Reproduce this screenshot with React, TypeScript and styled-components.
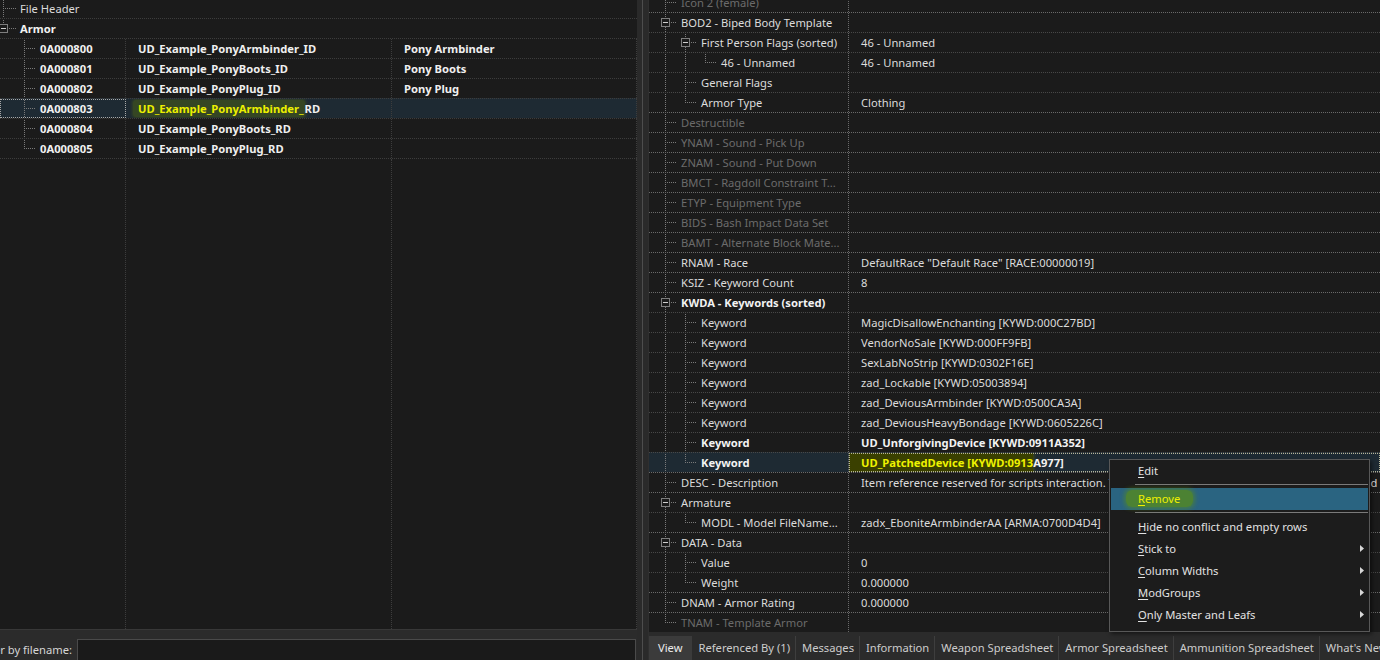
import React from 'react';
import styled, { createGlobalStyle } from 'styled-components';

const GlobalStyle = createGlobalStyle`
  html, body { margin: 0; padding: 0; background: #1b1b1b; overflow: hidden; }
  body { font-family: "Noto Sans", "DejaVu Sans", sans-serif; font-size: 11.2px; color: #dedede; }
  * { box-sizing: border-box; }
`;

const LINE = '#7a7a7a';
const BG = '#1b1b1b';
const SEL = '#1e2a33';

type TNode = {
  label: string;
  value?: string;
  cols?: [string, string];
  dim?: boolean;
  bold?: boolean;
  selected?: boolean;
  mark?: string;
  rest?: string;
  children?: TNode[];
};

type FlatRow = TNode & { level: number; last: boolean; conts: boolean[]; box: boolean };

type TreeCfg = { start: number; guide: (l: number) => number; textX: (l: number) => number };

function flatten(nodes: TNode[], level: number, conts: boolean[], out: FlatRow[]) {
  nodes.forEach((n, i) => {
    const last = i === nodes.length - 1;
    out.push({ ...n, level, last, conts: [...conts], box: !!n.children });
    if (n.children) flatten(n.children, level + 1, [...conts, !last], out);
  });
  return out;
}

const leftCfg: TreeCfg = { start: 0, guide: (l) => 3.5 + 20 * l + (l > 0 ? 1 : 0), textX: (l) => 20 + 20 * l };
const rightCfg: TreeCfg = { start: 1, guide: (l) => 16.5 + 20 * (l - 1), textX: (l) => 32 + 20 * (l - 1) };

const ConnSvg = styled.svg`
  display: block;
  flex: none;
  height: 20px;
  margin-top: -1px;
  overflow: visible;
`;

function Connector({ row, cfg }: { row: FlatRow; cfg: TreeCfg }) {
  const w = cfg.textX(row.level);
  const cy = 10.5;
  const r = 4;
  const x = cfg.guide(row.level);
  const dash = { stroke: LINE, strokeDasharray: '1 1', strokeWidth: 1 } as const;
  const els: React.ReactNode[] = [];
  row.conts.forEach((c, k) => {
    if (c) {
      const gx = cfg.guide(cfg.start + k);
      els.push(<line key={'c' + k} x1={gx} y1={0} x2={gx} y2={20} {...dash} />);
    }
  });
  if (row.box) {
    els.push(<line key="a" x1={x} y1={0} x2={x} y2={cy - r - 0.5} {...dash} />);
    if (!row.last) els.push(<line key="b" x1={x} y1={cy + r + 0.5} x2={x} y2={20} {...dash} />);
    els.push(<line key="h" x1={x + r + 1} y1={cy} x2={w - 4} y2={cy} {...dash} />);
    els.push(<rect key="r" x={x - r} y={cy - r} width={2 * r} height={2 * r} fill={BG} stroke="#7e7e7e" strokeWidth={1} />);
    els.push(<line key="m" x1={x - 2.5} y1={cy} x2={x + 2.5} y2={cy} stroke="#cfcfcf" strokeWidth={1} />);
  } else {
    els.push(<line key="a" x1={x} y1={0} x2={x} y2={row.last ? cy + 0.5 : 20} {...dash} />);
    els.push(<line key="h" x1={x + 1} y1={cy} x2={w - 4} y2={cy} {...dash} />);
  }
  return (
    <ConnSvg width={w} viewBox={`0 0 ${w} 20`} shapeRendering="crispEdges">
      {els}
    </ConnSvg>
  );
}

/* ---------- page ---------- */

const Page = styled.div`
  position: relative;
  width: 1380px;
  height: 660px;
  display: flex;
  overflow: hidden;
  background: ${BG};
`;

/* ---------- left pane ---------- */

const LeftPane = styled.div`
  width: 637px;
  flex: none;
  display: flex;
  flex-direction: column;
`;

const LeftList = styled.div`
  flex: 1;
  min-height: 0;
  overflow: hidden;
  background: ${BG};
  display: flex;
  flex-direction: column;
`;

const LeftRows = styled.div`
  margin-top: -2px;
  flex: 1;
  display: flex;
  flex-direction: column;
`;

const LRow = styled.div<{ $sel?: boolean }>`
  flex: none;
  display: grid;
  grid-template-columns: 126px 266px 1fr;
  height: 20px;
  border-top: 1px dotted #3d3d3d;
  background: ${(p) => (p.$sel ? SEL : 'transparent')};
`;

const LFiller = styled.div`
  flex: 1;
  display: grid;
  grid-template-columns: 126px 266px 1fr;
  border-top: 1px dotted #3d3d3d;
`;

const ColBox = styled.div`
  border-right: 1px dotted #3d3d3d;
`;

const TreeCell = styled.div<{ $span?: boolean; $focus?: boolean; $line?: string }>`
  display: flex;
  align-items: flex-start;
  overflow: hidden;
  white-space: nowrap;
  ${(p) => (p.$span ? 'grid-column: 1 / -1;' : `border-right: 1px dotted ${p.$line || '#3d3d3d'};`)}
  ${(p) => (p.$focus ? 'outline: 1px dotted #a8a8a8; outline-offset: -1px;' : '')}
`;

const Text = styled.span<{ $bold?: boolean; $dim?: boolean }>`
  line-height: 19px;
  font-weight: ${(p) => (p.$bold ? 700 : 400)};
  color: ${(p) => (p.$dim ? '#6b6b6b' : p.$bold ? '#f2f2f2' : '#dcdcdc')};
  white-space: nowrap;
`;

const DataCell = styled.div`
  padding-left: 12px;
  line-height: 19px;
  border-right: 1px dotted #3d3d3d;
  overflow: hidden;
  white-space: nowrap;
  font-weight: 700;
  color: #f0f0f0;
`;

const LeftMark = styled.span`
  color: #ecf000;
  background: rgba(110, 135, 0, 0.3);
  box-shadow: 0 0 3px 1px rgba(110, 135, 0, 0.28);
  border-radius: 3px;
  padding: 1px 1px 1px 5px;
  margin-left: -5px;
`;

const FilterBar = styled.div`
  height: 31px;
  flex: none;
  background: #2b2b2b;
  border-top: 1px solid #383838;
  display: flex;
  align-items: flex-start;
  padding-top: 9px;
  overflow: hidden;
`;

const FilterLabel = styled.label`
  flex: none;
  width: 104px;
  margin-left: -30px;
  padding-right: 2px;
  text-align: right;
  line-height: 22px;
  color: #d6d6d6;
  white-space: nowrap;
`;

const FilterInput = styled.input`
  flex: none;
  width: 559px;
  height: 22px;
  margin: 0 0 0 3px;
  background: #1a1a1a;
  border: 1px solid #4a4a4a;
  outline: none;
  color: #ddd;
  font: inherit;
`;

/* ---------- splitter ---------- */

const Splitter = styled.div`
  width: 11px;
  flex: none;
  background: #2a2a2a;
  display: flex;
  justify-content: center;
  &::after {
    content: '';
    width: 1px;
    background: #4d4d4d;
  }
`;

/* ---------- right pane ---------- */

const RightPane = styled.div`
  flex: 1;
  min-width: 0;
  display: flex;
  flex-direction: column;
  border-left: 1px solid #2f2f2f;
`;

const RightTree = styled.div`
  flex: 1;
  min-height: 0;
  overflow: hidden;
  background: ${BG};
  display: flex;
  flex-direction: column;
`;

const RightRows = styled.div`
  margin-top: -8px;
  flex: 1;
  display: flex;
  flex-direction: column;
`;

const RRow = styled.div<{ $sel?: boolean; $top?: boolean }>`
  flex: none;
  display: grid;
  grid-template-columns: 200px 1fr;
  height: 20px;
  border-top: 1px dotted ${(p) => (p.$top ? '#6a6a6a' : '#484848')};
  background: ${(p) => (p.$sel ? SEL : 'transparent')};
`;

const RFiller = styled.div`
  flex: 1;
  display: grid;
  grid-template-columns: 200px 1fr;
  border-top: 1px dotted #6a6a6a;
`;

const RColBox = styled.div`
  border-right: 1px dotted #6a6a6a;
`;

const ValueCell = styled.div<{ $bold?: boolean; $focus?: boolean; $flush?: boolean }>`
  padding-left: ${(p) => (p.$flush ? 0 : 12)}px;
  line-height: 19px;
  overflow: hidden;
  white-space: nowrap;
  font-weight: ${(p) => (p.$bold ? 700 : 400)};
  color: ${(p) => (p.$bold ? '#f2f2f2' : '#dcdcdc')};
  ${(p) => (p.$focus ? 'outline: 1px dotted #b5b59a; outline-offset: -1px;' : '')}
`;

const ValueMark = styled.span`
  display: inline-block;
  height: 19px;
  padding-left: 12px;
  color: #eef200;
  background: #3a4000;
  box-shadow: 0 0 3px 1px rgba(90, 100, 0, 0.6);
`;

const TabBar = styled.div`
  height: 28px;
  flex: none;
  background: #2b2b2b;
  display: flex;
  align-items: flex-end;
  overflow: hidden;
`;

const Tab = styled.div<{ $active?: boolean }>`
  flex: none;
  height: 24px;
  line-height: 24px;
  padding: ${(p) => (p.$active ? '0 9px' : '0 5px 0 6px')};
  background: ${(p) => (p.$active ? '#3b3b3b' : 'transparent')};
  color: ${(p) => (p.$active ? '#ececec' : '#cdcdcd')};
  border-right: 1px solid ${(p) => (p.$active ? '#3b3b3b' : '#3e3e3e')};
  white-space: nowrap;
`;

/* ---------- context menu ---------- */

const Menu = styled.div`
  position: absolute;
  left: 1109px;
  top: 459px;
  width: 261px;
  background: #1c1c1c;
  border: 1px solid #585858;
  padding: 0 1px 5px 1px;
  box-shadow: 2px 2px 4px rgba(0, 0, 0, 0.5);
`;

const MenuItem = styled.div<{ $hot?: boolean }>`
  height: 22px;
  display: flex;
  align-items: center;
  padding: 0 4px 2px 27px;
  color: ${(p) => (p.$hot ? '#eef000' : '#e2e2e2')};
  background: ${(p) => (p.$hot ? '#2a6481' : 'transparent')};
  white-space: nowrap;
  u { text-underline-offset: 2px; }
`;

const MenuSep = styled.div`
  height: 1px;
  background: #7a7a7a;
  margin: 2px 0 3px 24px;
`;

const MenuGlow = styled.span`
  padding: 1px 13px 1px 12px;
  margin-left: -12px;
  background: rgba(100, 150, 0, 0.6);
  box-shadow: 0 0 4px 2px rgba(100, 150, 0, 0.45);
  border-radius: 6px;
`;

const Arrow = styled.svg`
  margin-left: auto;
  flex: none;
`;

/* ---------- data ---------- */

const leftTree: TNode[] = [
  { label: 'File Header' },
  {
    label: 'Armor',
    bold: true,
    children: [
      { label: '0A000800', cols: ['UD_Example_PonyArmbinder_ID', 'Pony Armbinder'] },
      { label: '0A000801', cols: ['UD_Example_PonyBoots_ID', 'Pony Boots'] },
      { label: '0A000802', cols: ['UD_Example_PonyPlug_ID', 'Pony Plug'] },
      { label: '0A000803', cols: ['', ''], selected: true, mark: 'UD_Example_PonyArmbinder_', rest: 'RD' },
      { label: '0A000804', cols: ['UD_Example_PonyBoots_RD', ''] },
      { label: '0A000805', cols: ['UD_Example_PonyPlug_RD', ''] },
    ],
  },
];

const kw = (v: string): TNode => ({ label: 'Keyword', value: v });

const rightTree: TNode[] = [
  { label: 'Icon 2 (female)', dim: true },
  {
    label: 'BOD2 - Biped Body Template',
    children: [
      {
        label: 'First Person Flags (sorted)',
        value: '46 - Unnamed',
        children: [{ label: '46 - Unnamed', value: '46 - Unnamed' }],
      },
      { label: 'General Flags' },
      { label: 'Armor Type', value: 'Clothing' },
    ],
  },
  { label: 'Destructible', dim: true },
  { label: 'YNAM - Sound - Pick Up', dim: true },
  { label: 'ZNAM - Sound - Put Down', dim: true },
  { label: 'BMCT - Ragdoll Constraint T...', dim: true },
  { label: 'ETYP - Equipment Type', dim: true },
  { label: 'BIDS - Bash Impact Data Set', dim: true },
  { label: 'BAMT - Alternate Block Mate...', dim: true },
  { label: 'RNAM - Race', value: 'DefaultRace "Default Race" [RACE:00000019]' },
  { label: 'KSIZ - Keyword Count', value: '8' },
  {
    label: 'KWDA - Keywords (sorted)',
    bold: true,
    children: [
      kw('MagicDisallowEnchanting [KYWD:000C27BD]'),
      kw('VendorNoSale [KYWD:000FF9FB]'),
      kw('SexLabNoStrip [KYWD:0302F16E]'),
      kw('zad_Lockable [KYWD:05003894]'),
      kw('zad_DeviousArmbinder [KYWD:0500CA3A]'),
      kw('zad_DeviousHeavyBondage [KYWD:0605226C]'),
      { label: 'Keyword', bold: true, value: 'UD_UnforgivingDevice [KYWD:0911A352]' },
      { label: 'Keyword', bold: true, selected: true, mark: 'UD_PatchedDevice [KYWD:0913', rest: 'A977]' },
    ],
  },
  {
    label: 'DESC - Description',
    value:
      'Item reference reserved for scripts interaction. This item is only used by the framework scripts and not you.',
  },
  {
    label: 'Armature',
    children: [{ label: 'MODL - Model FileName...', value: 'zadx_EboniteArmbinderAA [ARMA:0700D4D4]' }],
  },
  {
    label: 'DATA - Data',
    children: [
      { label: 'Value', value: '0' },
      { label: 'Weight', value: '0.000000' },
    ],
  },
  { label: 'DNAM - Armor Rating', value: '0.000000' },
  { label: 'TNAM - Template Armor', dim: true },
];

const tabs = [
  'View',
  'Referenced By (1)',
  'Messages',
  'Information',
  'Weapon Spreadsheet',
  'Armor Spreadsheet',
  'Ammunition Spreadsheet',
  "What's New",
];

type MenuEntry = { key: string; u: string; rest: string; hot?: boolean; sub?: boolean; sepAfter?: boolean };
const menu: MenuEntry[] = [
  { key: 'edit', u: 'E', rest: 'dit', sepAfter: true },
  { key: 'remove', u: 'R', rest: 'emove', hot: true, sepAfter: true },
  { key: 'hide', u: 'H', rest: 'ide no conflict and empty rows' },
  { key: 'stick', u: 'S', rest: 'tick to', sub: true },
  { key: 'cols', u: 'C', rest: 'olumn Widths', sub: true },
  { key: 'mod', u: 'M', rest: 'odGroups', sub: true },
  { key: 'only', u: 'O', rest: 'nly Master and Leafs', sub: true },
];

export default function App() {
  const leftRows = flatten(leftTree, 0, [], []);
  const rightRows = flatten(rightTree, 1, [], []);

  return (
    <>
      <GlobalStyle />
      <Page>
        <LeftPane>
          <LeftList>
            <LeftRows>
              {leftRows.map((r, i) =>
                r.cols ? (
                  <LRow key={i} $sel={r.selected}>
                    <TreeCell $focus={r.selected}>
                      <Connector row={r} cfg={leftCfg} />
                      <Text $bold>{r.label}</Text>
                    </TreeCell>
                    <DataCell>
                      {r.mark ? (
                        <>
                          <LeftMark>{r.mark}</LeftMark>
                          {r.rest}
                        </>
                      ) : (
                        r.cols[0]
                      )}
                    </DataCell>
                    <DataCell>{r.cols[1]}</DataCell>
                  </LRow>
                ) : (
                  <LRow key={i}>
                    <TreeCell $span>
                      <Connector row={r} cfg={leftCfg} />
                      <Text $bold={r.bold}>{r.label}</Text>
                    </TreeCell>
                  </LRow>
                )
              )}
              <LFiller>
                <ColBox />
                <ColBox />
                <ColBox />
              </LFiller>
            </LeftRows>
          </LeftList>
          <FilterBar>
            <FilterLabel>Filter by filename:</FilterLabel>
            <FilterInput readOnly value="" />
          </FilterBar>
        </LeftPane>

        <Splitter />

        <RightPane>
          <RightTree>
            <RightRows>
              {rightRows.map((r, i) => (
                <RRow key={i} $sel={r.selected} $top={r.level === 1}>
                  <TreeCell $line="#6a6a6a">
                    <Connector row={r} cfg={rightCfg} />
                    <Text $bold={r.bold} $dim={r.dim}>
                      {r.label}
                    </Text>
                  </TreeCell>
                  {r.mark ? (
                    <ValueCell $bold $focus $flush>
                      <ValueMark>{r.mark}</ValueMark>
                      {r.rest}
                    </ValueCell>
                  ) : (
                    <ValueCell $bold={r.bold}>{r.value}</ValueCell>
                  )}
                </RRow>
              ))}
              <RFiller>
                <RColBox />
                <div />
              </RFiller>
            </RightRows>
          </RightTree>
          <TabBar>
            {tabs.map((t, i) => (
              <Tab key={t} $active={i === 0}>
                {t}
              </Tab>
            ))}
          </TabBar>
        </RightPane>

        <Menu>
          {menu.map((m) => (
            <React.Fragment key={m.key}>
              <MenuItem $hot={m.hot}>
                {m.hot ? (
                  <MenuGlow>
                    <u>{m.u}</u>
                    {m.rest}
                  </MenuGlow>
                ) : (
                  <span>
                    <u>{m.u}</u>
                    {m.rest}
                  </span>
                )}
                {m.sub && (
                  <Arrow width="4" height="7" viewBox="0 0 4 7">
                    <path d="M0 0 L4 3.5 L0 7 Z" fill="#d8d8d8" />
                  </Arrow>
                )}
              </MenuItem>
              {m.sepAfter && <MenuSep />}
            </React.Fragment>
          ))}
        </Menu>
      </Page>
    </>
  );
}
